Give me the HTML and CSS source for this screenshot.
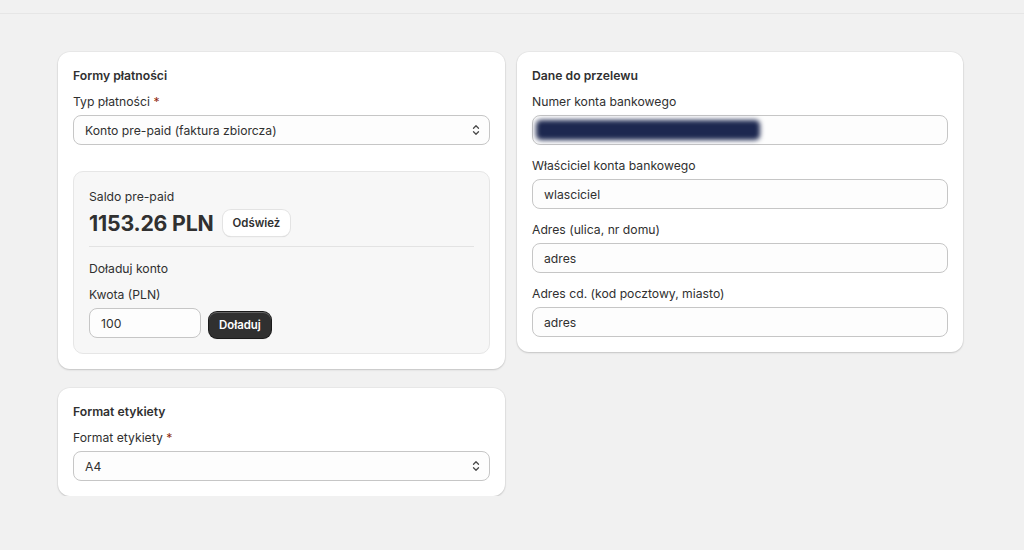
FILE: index.html
```html
<!DOCTYPE html>
<html lang="pl">
	<head>
		<meta charset="utf-8">
		<link rel="stylesheet" href="styles.css">
	</head>
	<body>
		<div class="topbar"></div>
		<div class="page">
			<div class="column">
				<div class="card">
					<h2>Formy płatności</h2>
					<div class="field">
						<label>Typ płatności <span class="req">*</span></label>
						<div class="select">
							<span>Konto pre-paid (faktura zbiorcza)</span>
							<svg class="caret" viewBox="0 0 10 14" width="10" height="14"><path d="M2.5 5.2 5 2.7l2.5 2.5M2.5 8.8 5 11.3l2.5-2.5" fill="none" stroke="#4a4a4a" stroke-width="1.3" stroke-linecap="round" stroke-linejoin="round"/></svg>
						</div>
					</div>
					<div class="prepaid">
						<div class="muted">Saldo pre-paid</div>
						<div class="balance">
							<span class="amount">1153.26 PLN</span>
							<button class="btn">Odśwież</button>
						</div>
						<div class="divider"></div>
						<div class="muted topup">Doładuj konto</div>
						<label>Kwota (PLN)</label>
						<div class="topup-row">
							<div class="input small">100</div>
							<button class="btn dark">Doładuj</button>
						</div>
					</div>
				</div>
				<div class="card">
					<h2>Format etykiety</h2>
					<div class="field">
						<label>Format etykiety <span class="req">*</span></label>
						<div class="select">
							<span>A4</span>
							<svg class="caret" viewBox="0 0 10 14" width="10" height="14"><path d="M2.5 5.2 5 2.7l2.5 2.5M2.5 8.8 5 11.3l2.5-2.5" fill="none" stroke="#4a4a4a" stroke-width="1.3" stroke-linecap="round" stroke-linejoin="round"/></svg>
						</div>
					</div>
				</div>
			</div>
			<div class="column">
				<div class="card">
					<h2>Dane do przelewu</h2>
					<div class="field">
						<label>Numer konta bankowego</label>
						<div class="input blurred"><span class="smudge"></span></div>
					</div>
					<div class="field">
						<label>Właściciel konta bankowego</label>
						<div class="input">wlasciciel</div>
					</div>
					<div class="field">
						<label>Adres (ulica, nr domu)</label>
						<div class="input">adres</div>
					</div>
					<div class="field">
						<label>Adres cd. (kod pocztowy, miasto)</label>
						<div class="input">adres</div>
					</div>
				</div>
			</div>
		</div>
	</body>
</html>
```

FILE: styles.css
```css
body{
	margin:0;
	background:#f1f1f1;
	font-family:Inter,"Noto Sans",sans-serif;
	font-size:12.2px;
	color:#303030;
}
.topbar{
	height:13px;
	border-bottom:1px solid #e6e6e6;
}
.page{
	display:grid;
	grid-template-columns:447px 446px;
	column-gap:12px;
	align-items:start;
	padding:38px 0 0 58px;
}
.column{
	display:flex;
	flex-direction:column;
	gap:19px;
}
.card{
	background:#fff;
	border-radius:12px;
	padding:14px 15px 15px;
	box-shadow:0 1px 2px rgba(0,0,0,.16),0 0 0 1px rgba(0,0,0,.03);
}
h2{
	margin:0 0 6px;
	font-size:12.2px;
	font-weight:600;
	line-height:20px;
}
label{
	display:block;
	line-height:20px;
	margin-bottom:3px;
}
.req{
	color:#8e1f0b;
}
.field + .field{
	margin-top:11px;
}
.select,.input{
	box-sizing:border-box;
	height:30px;
	display:flex;
	align-items:center;
	padding:0 11px;
	background:#fdfdfd;
	border:1px solid #c6c6c6;
	border-radius:8px;
}
.select{
	justify-content:space-between;
	padding-right:8px;
}
.input.small{
	width:112px;
}
.input.blurred{
	padding:0 3px;
}
.smudge{
	display:block;
	width:224px;
	height:20px;
	border-radius:5px;
	background:#1d2850;
	filter:blur(2.5px);
}
.prepaid{
	margin-top:26px;
	background:#f7f7f7;
	border:1px solid #e6e6e6;
	border-radius:10px;
	padding:15px 15px 15px;
}
.muted{
	line-height:20px;
}
.balance{
	display:flex;
	align-items:center;
	gap:9px;
	margin-top:3px;
	height:26px;
}
.amount{
	font-size:21.3px;
	font-weight:700;
	letter-spacing:-.2px;
}
.divider{
	height:1px;
	background:#e3e3e3;
	margin:10px 0 12px;
}
.topup{
	margin-bottom:6px;
}
.topup-row{
	display:flex;
	align-items:flex-end;
	gap:8px;
}
.btn{
	font-family:Inter,"Noto Sans",sans-serif;
	font-size:11.4px;
	font-weight:600;
	height:26px;
	padding:0 10px;
	border-radius:8px;
	border:0;
	background:#fff;
	color:#303030;
	box-shadow:0 0 0 1px #e3e3e3,0 1px 1px rgba(0,0,0,.18);
}
.btn.dark{
	background:#303030;
	color:#fff;
	box-shadow:inset 0 1px 0 rgba(255,255,255,.25),0 0 0 1px #1a1a1a,0 1px 1px rgba(0,0,0,.3);
}
```
